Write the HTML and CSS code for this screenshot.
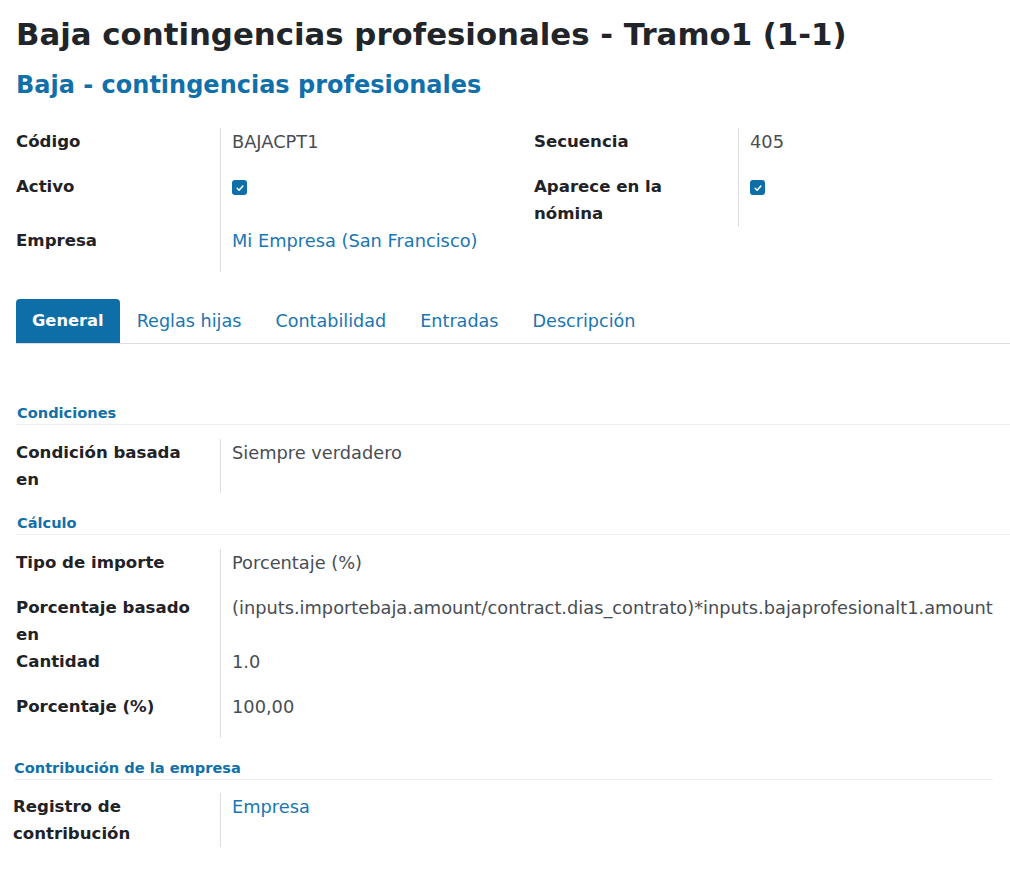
FILE: index.html
```html
<!DOCTYPE html>
<html lang="es">
<head>
<meta charset="utf-8">
<title>Baja contingencias profesionales - Tramo1 (1-1)</title>
<link rel="stylesheet" href="styles.css">
</head>
<body>
<div class="sheet">
  <h1 class="title">Baja contingencias profesionales - Tramo1 (1-1)</h1>
  <h2 class="subtitle">Baja - contingencias profesionales</h2>

  <div class="top-groups">
    <div class="group">
      <div class="row">
        <div class="label">Código</div>
        <div class="value">BAJACPT1</div>
      </div>
      <div class="row row-tall">
        <div class="label">Activo</div>
        <div class="value"><span class="check"><svg viewBox="0 0 16 16" width="10" height="10"><path d="M3.5 8.5l3 3 6-6.5" fill="none" stroke="#fff" stroke-width="2.4" stroke-linecap="round" stroke-linejoin="round"/></svg></span></div>
      </div>
      <div class="row">
        <div class="label">Empresa</div>
        <div class="value"><a class="link" href="#">Mi Empresa (San Francisco)</a></div>
      </div>
    </div>
    <div class="group">
      <div class="row">
        <div class="label">Secuencia</div>
        <div class="value">405</div>
      </div>
      <div class="row row-tall">
        <div class="label">Aparece en la nómina</div>
        <div class="value"><span class="check"><svg viewBox="0 0 16 16" width="10" height="10"><path d="M3.5 8.5l3 3 6-6.5" fill="none" stroke="#fff" stroke-width="2.4" stroke-linecap="round" stroke-linejoin="round"/></svg></span></div>
      </div>
    </div>
  </div>

  <ul class="tabs">
    <li class="tab active">General</li>
    <li class="tab">Reglas hijas</li>
    <li class="tab">Contabilidad</li>
    <li class="tab">Entradas</li>
    <li class="tab">Descripción</li>
  </ul>

  <section class="section section-first">
    <div class="section-title">Condiciones</div>
    <div class="row">
      <div class="label">Condición basada en</div>
      <div class="value">Siempre verdadero</div>
    </div>
  </section>

  <section class="section">
    <div class="section-title">Cálculo</div>
    <div class="row">
      <div class="label">Tipo de importe</div>
      <div class="value">Porcentaje (%)</div>
    </div>
    <div class="row">
      <div class="label">Porcentaje basado en</div>
      <div class="value nowrap">(inputs.importebaja.amount/contract.dias_contrato)*inputs.bajaprofesionalt1.amount</div>
    </div>
    <div class="row">
      <div class="label">Cantidad</div>
      <div class="value">1.0</div>
    </div>
    <div class="row">
      <div class="label">Porcentaje (%)</div>
      <div class="value">100,00</div>
    </div>
  </section>

  <section class="section section-contrib">
    <div class="section-title">Contribución de la empresa</div>
    <div class="row">
      <div class="label">Registro de contribución</div>
      <div class="value"><a class="link" href="#">Empresa</a></div>
    </div>
  </section>
</div>
</body>
</html>
```
FILE: styles.css
```css
html, body {
  margin: 0;
  padding: 0;
  background: #ffffff;
  overflow: hidden;
}

body {
  font-family: "DejaVu Sans", "Noto Sans", sans-serif;
  color: #212529;
}

.sheet {
  padding: 14px 0 0 16px;
}

.title {
  margin: 0;
  font-size: 30.8px;
  line-height: 40px;
  font-weight: 700;
  color: #212529;
  white-space: nowrap;
}

.subtitle {
  margin: 15px 0 0 0;
  font-size: 24px;
  line-height: 32px;
  font-weight: 700;
  color: #1170aa;
}

.top-groups {
  display: grid;
  grid-template-columns: 502px 1fr;
  column-gap: 16px;
  margin-top: 27px;
}

.row {
  display: flex;
  min-height: 45px;
}

.row-tall {
  min-height: 54px;
}

.label {
  flex: none;
  width: 204px;
  box-sizing: border-box;
  padding-right: 24px;
  font-size: 16.6px;
  line-height: 27px;
  font-weight: 700;
  color: #1f2226;
}

.value {
  flex: 1;
  min-width: 0;
  border-left: 1px solid #dcdee1;
  padding-left: 11px;
  font-size: 17.8px;
  line-height: 27px;
  color: #484d54;
}

.nowrap {
  white-space: nowrap;
}

.link {
  color: #1a76b1;
  text-decoration: none;
}

.check {
  display: flex;
  align-items: center;
  justify-content: center;
  width: 15px;
  height: 15px;
  margin-top: 7px;
  border-radius: 3px;
  background: #0e6ea7;
}

.tabs {
  display: flex;
  list-style: none;
  margin: 27px 0 0 0;
  padding: 0;
  border-bottom: 1px solid #dcdce2;
}

.tab {
  padding: 0 17px;
  height: 44px;
  line-height: 44px;
  font-size: 17.6px;
  color: #1a76b1;
}

.tab.active {
  padding: 0 16px 0 16px;
  background: #0e6ea7;
  color: #ffffff;
  font-weight: 700;
  font-size: 16.3px;
  border-radius: 4px 4px 0 0;
}

.section {
  margin-top: 19px;
}

.section-first {
  margin-top: 58px;
}

.section-title {
  font-size: 14.6px;
  line-height: 22px;
  font-weight: 700;
  color: #1170a8;
  padding-left: 1px;
  border-bottom: 1px solid #eeeff1;
  margin-bottom: 14px;
}

.section-contrib {
  margin-top: 19px;
  margin-left: -2px;
  margin-right: 17px;
}

.section-contrib .section-title {
  padding-left: 0;
  margin-bottom: 13px;
}

.section-contrib .label {
  width: 207px;
  margin-left: -1px;
}
```
